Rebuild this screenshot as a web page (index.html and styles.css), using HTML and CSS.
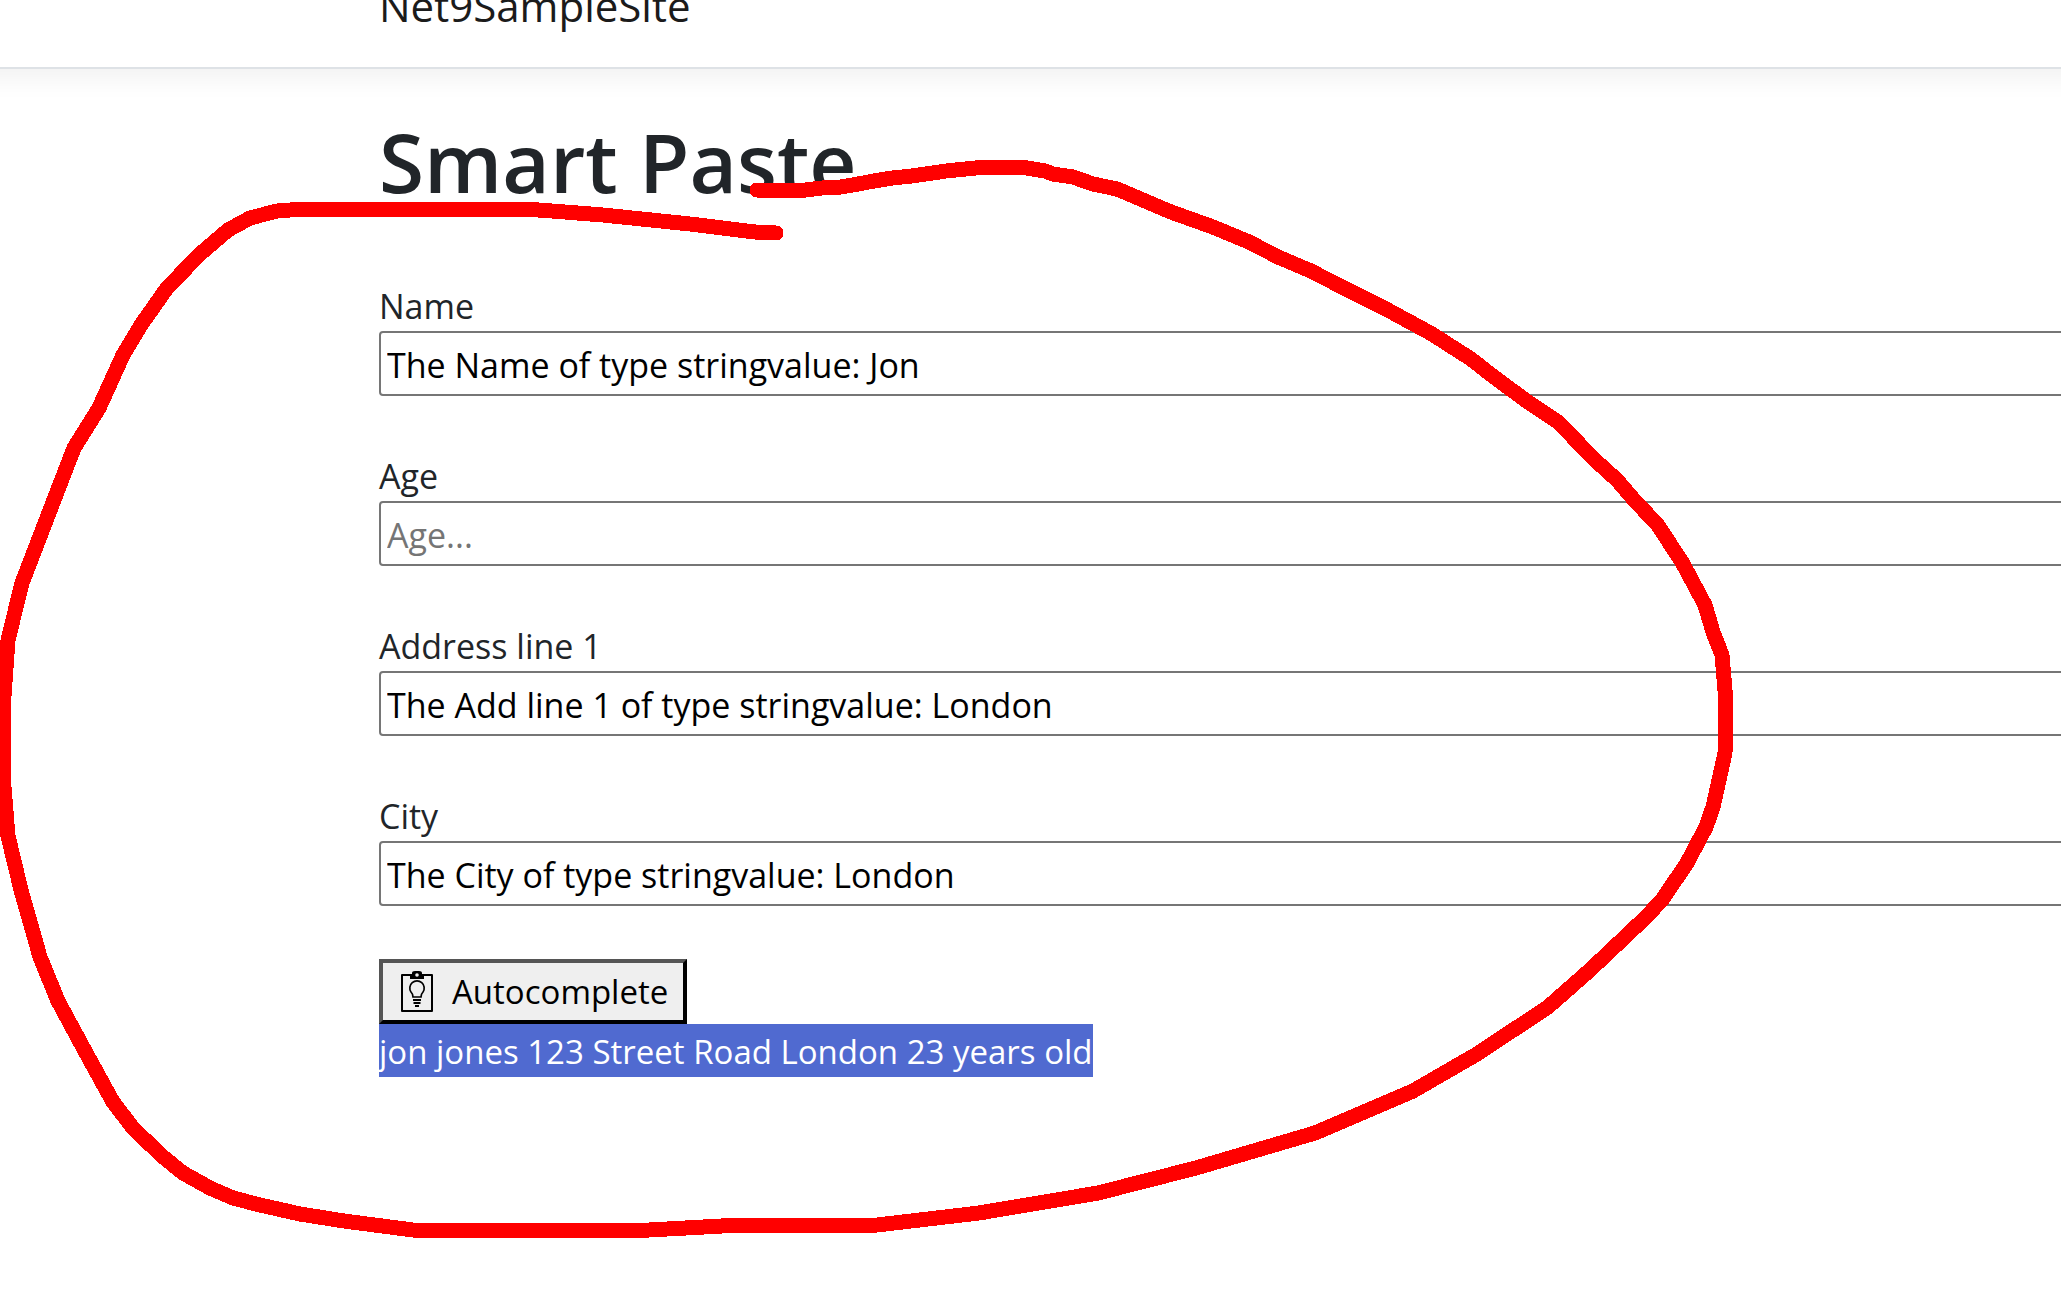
FILE: index.html
```html
<!DOCTYPE html>
<html lang="en">
<head>
<meta charset="utf-8">
<title>Smart Paste - Net9SampleSite</title>
<link rel="stylesheet" href="styles.css">
</head>
<body>
<header class="navbar">
  <a class="navbar-brand" href="#">Net9SampleSite</a>
</header>
<main class="content">
  <h1 class="title">Smart Paste</h1>
  <form class="form">
    <div class="fields">
      <div class="field">
        <label for="name">Name</label>
        <input id="name" type="text" placeholder="Name..." value="The Name of type stringvalue: Jon">
      </div>
      <div class="field">
        <label for="age">Age</label>
        <input id="age" type="text" placeholder="Age...">
      </div>
      <div class="field">
        <label for="address">Address line 1</label>
        <input id="address" type="text" placeholder="Address line 1..." value="The Add line 1 of type stringvalue: London">
      </div>
      <div class="field">
        <label for="city">City</label>
        <input id="city" type="text" placeholder="City..." value="The City of type stringvalue: London">
      </div>
    </div>
    <button class="smart-paste" type="button">
      <svg class="icon" viewBox="0 0 32 42" aria-hidden="true">
        <path d="M1 4h30v36H1z" fill="none" stroke="#000" stroke-width="2" stroke-linejoin="round"/>
        <path d="M9 8V4q0-1 2-1V2q0-2 3-2h4q3 0 3 2v1q2 0 2 1v4z"/>
        <circle cx="16" cy="4" r="1.800" fill="#efefef"/>
        <path d="M12 26q0-3-2-5a7.200 7.200 0 1 1 12 0q-2 2-2 5z" fill="none" stroke="#000" stroke-width="1.700"/>
        <path d="M12 29h8M12.500 32h7M14 35h4" fill="none" stroke="#000" stroke-width="1.800"/>
      </svg>
      Autocomplete
    </button>
  </form>
  <p class="sample"><mark>jon jones 123 Street Road London 23 years old</mark></p>
</main>
<svg class="annotation" width="2061" height="1305" viewBox="0 0 2061 1305" aria-hidden="true">
  <polyline points="757,190 806,190 822,188 841,187 858,184 874,181 892,178 912,176 946,171 985,167 1021,167 1045,171 1053,174 1073,177 1093,184 1117,189 1171,212 1213,227 1249,242 1278,257 1311,271 1340,286 1386,309 1432,334 1471,359 1494,377 1528,402 1558,422 1595,460 1617,480 1635,501 1657,524 1682,562 1705,605 1713,632 1722,655 1726,702 1725,753 1713,807 1706,827 1687,863 1662,900 1645,918 1590,970 1548,1007 1477,1054 1413,1091 1315,1133 1196,1168 1098,1193 979,1213 877,1225 740,1225 649,1230 413,1230 344,1221 300,1214 260,1205 233,1198 210,1188 183,1173 162,1156 133,1128 113,1102 85,1051 58,1001 40,957 21,890 8,836 3,775 3,710 8,640 22,583 74,448 99,408 123,355 141,325 167,288 200,254 228,230 250,218 277,211 303,209 525,209 565,212 603,215 690,224 755,232 776,233"/>
</svg>
</body>
</html>
```
FILE: styles.css
```css
* {
  box-sizing: border-box;
}

body {
  position: relative;
  min-height: 100vh;
  margin: 0;
  overflow: hidden;
  background: #fff;
  color: #212529;
  font-family: "Segoe UI", "Open Sans", "Noto Sans", sans-serif;
  font-size: 34px;
  line-height: 53px;
}

.navbar {
  display: flex;
  align-items: flex-end;
  height: 69px;
  margin: 0 -40px;
  padding: 0 0 28px 419px;
  border-bottom: 2px solid #dee2e6;
  box-shadow: 0 9px 27px rgba(0, 0, 0, 0.06);
}

.navbar-brand {
  color: #1b1b1b;
  font-size: 42px;
  line-height: 66px;
  text-decoration: none;
}

.content {
  margin: 0 -40px 0 379px;
}

.title {
  margin: 0;
  padding: 38px 0 63px;
  font-size: 82px;
  font-weight: 600;
  line-height: 108px;
}

.fields {
  display: grid;
  gap: 52px;
}

.field {
  display: grid;
}

.field label {
  padding-top: 4px;
  line-height: 49px;
}

.field input {
  width: 100%;
  height: 65px;
  padding: 4px 6px 2px;
  border: 2px solid #767676;
  border-radius: 4px;
  background: #fff;
  color: #000;
  font: inherit;
}

.field input::placeholder {
  color: #757575;
}

.smart-paste {
  display: flex;
  align-items: center;
  gap: 19px;
  height: 65px;
  margin-top: 53px;
  padding: 0 15px 0 18px;
  border: 4px solid;
  border-color: #555 #000 #000 #555;
  background: #efefef;
  color: #000;
  font: inherit;
  font-size: 33px;
}

.icon {
  width: 32px;
  height: 42px;
}

.sample {
  margin: 0;
  font-size: 33px;
}

.sample mark {
  display: inline-block;
  padding-top: 2px;
  background: #506ad0;
  color: #fff;
  line-height: 51px;
}

.annotation {
  position: absolute;
  top: 0;
  left: 0;
  fill: none;
  stroke: #f00;
  stroke-width: 15px;
  stroke-linecap: round;
  stroke-linejoin: round;
  shape-rendering: crispEdges;
  pointer-events: none;
}
```
